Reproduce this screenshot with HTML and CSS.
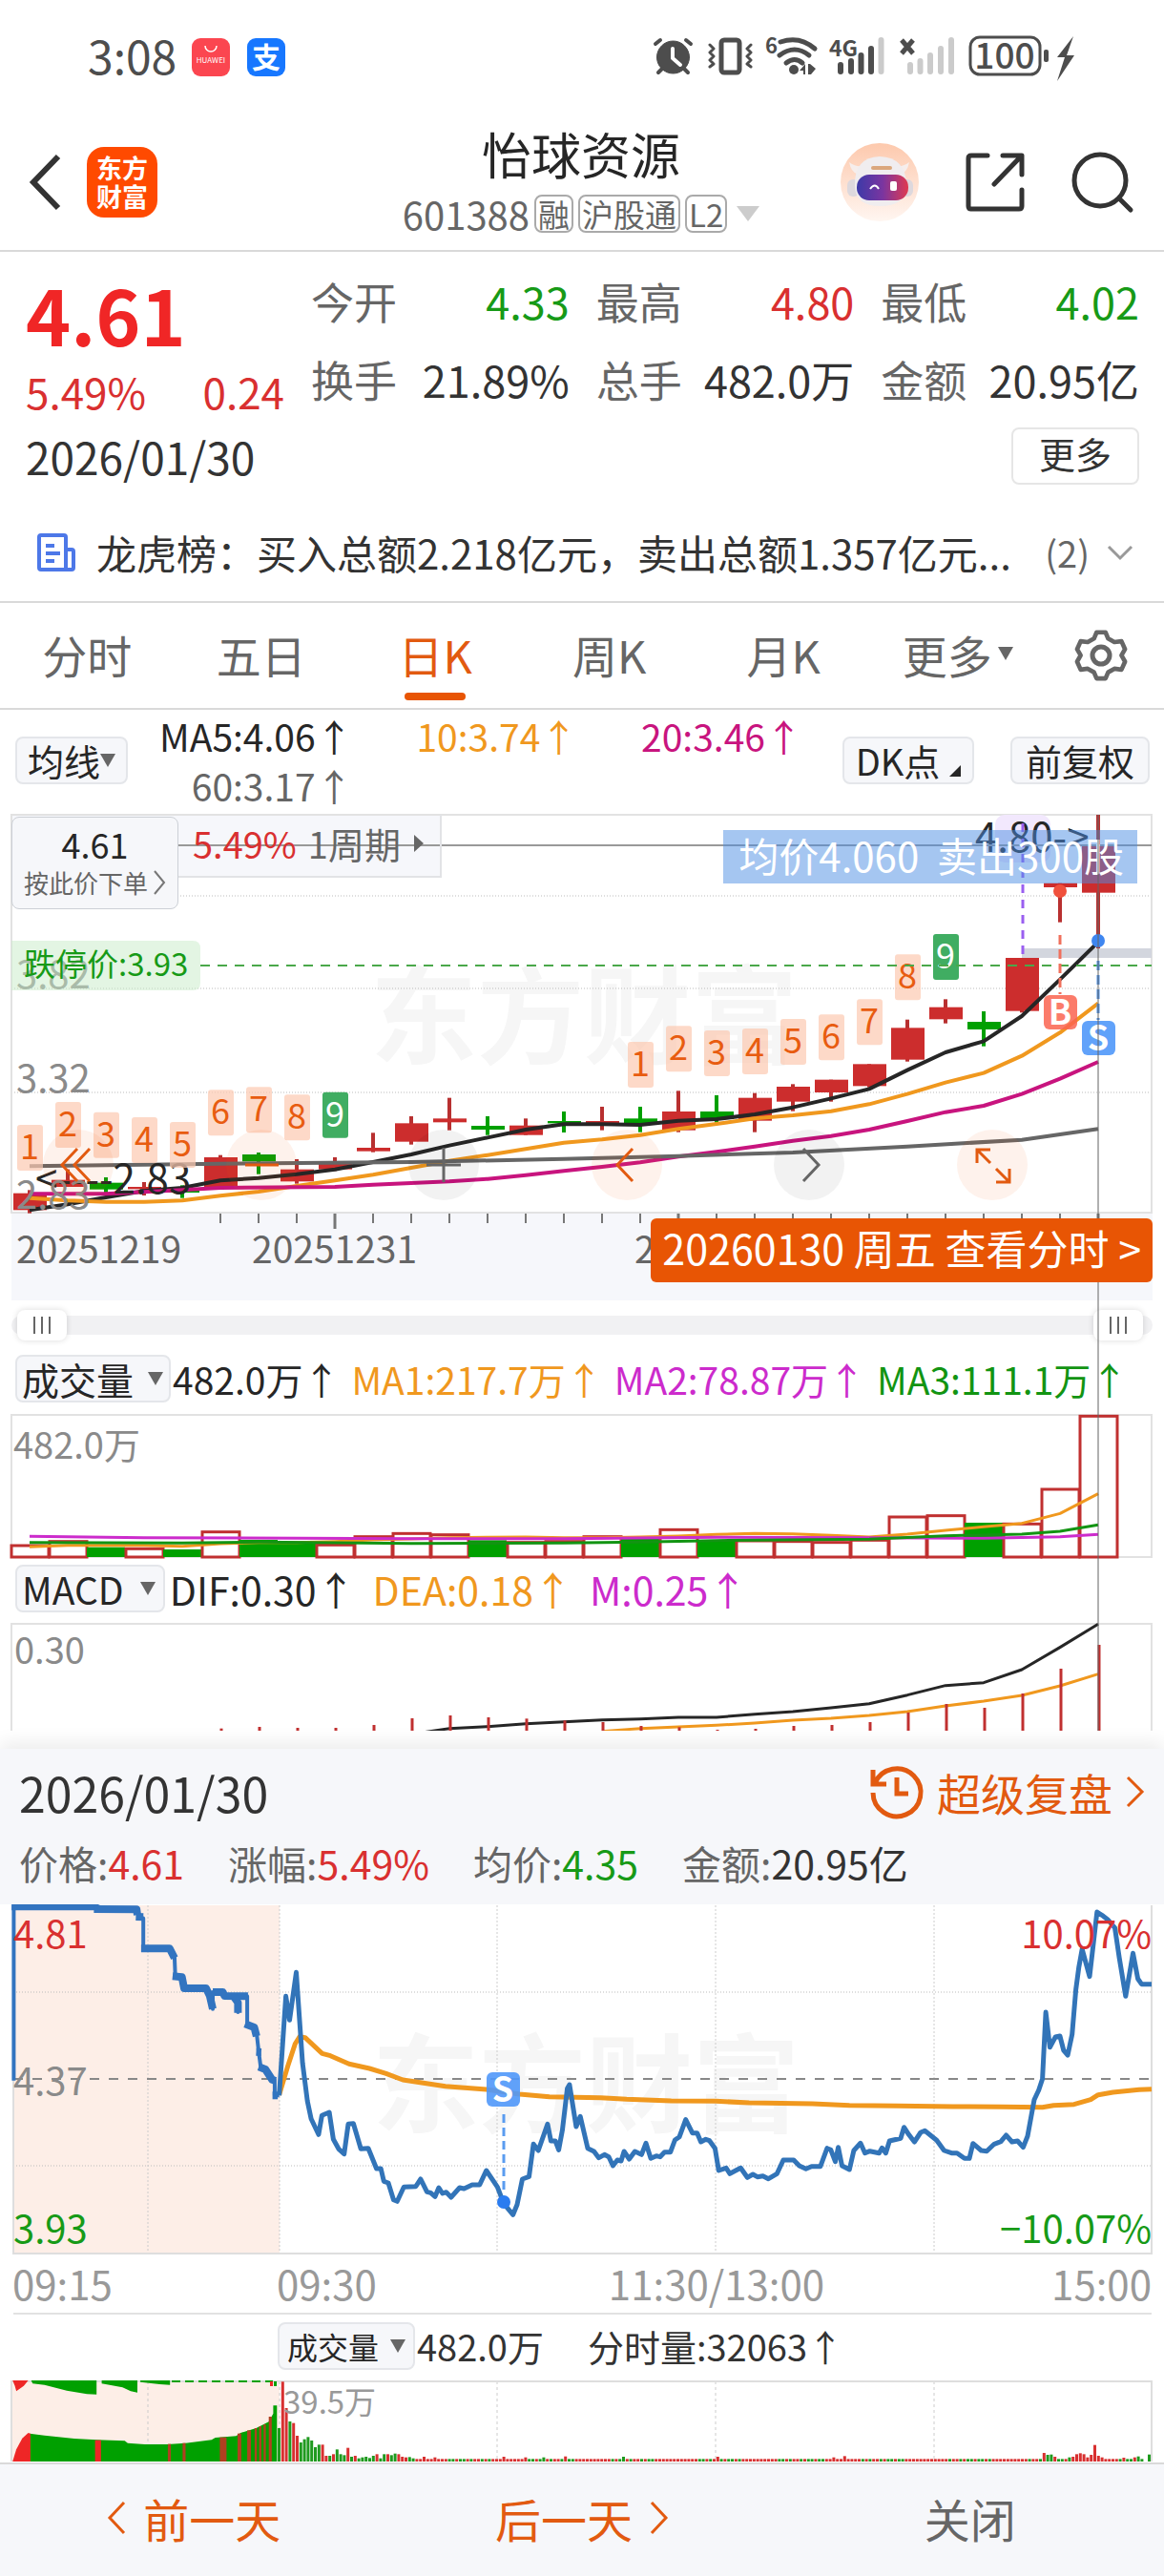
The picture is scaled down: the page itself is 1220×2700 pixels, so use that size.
FILE: index.html
```html
<!DOCTYPE html>
<html lang="zh-CN">
<head>
  <meta charset="UTF-8">
  <meta name="viewport" content="width=device-width, initial-scale=1.0">
  <title>怡球资源 601388</title>
  <link rel="stylesheet" href="styles.css">
</head>
<body>
  <!-- Status bar -->
  <div class="status-bar">
    <span class="clock">3:08</span>
    <svg class="app-icon" viewBox="0 0 40 40">
      <rect width="40" height="40" rx="9" fill="#fb4650"/>
      <path d="M14 8a6 6 0 0 0 12 0" fill="none" stroke="#fff" stroke-width="1.5"/>
      <text x="20" y="26" text-anchor="middle" font-size="8" fill="#fff">HUAWEI</text>
    </svg>
    <svg class="app-icon" viewBox="0 0 40 40">
      <rect width="40" height="40" rx="9" fill="#1777ff"/>
      <text x="20" y="31" text-anchor="middle" font-size="30" font-weight="bold" fill="#fff">支</text>
    </svg>
    <svg class="status-icons" viewBox="14 10 444 50" fill="#4d4d4d">
      <g stroke="#4d4d4d" stroke-linecap="round" stroke-linejoin="round">
        <circle cx="35.500" cy="35" r="17"/>
        <path d="M17 21l5-4M54 21l-5-4M24 47l-4 4M47 47l4 4" stroke-width="4" fill="none"/>
        <path d="M35 26v10l8 7" stroke="#fff" stroke-width="4" fill="none"/>
        <rect x="86" y="17" width="19" height="34" rx="3" stroke-width="5" fill="none"/>
        <path d="M74 22l4 4-4 4 4 4-4 4 4 4-4 3M117 22l-4 4 4 4-4 4 4 4-4 4 4 3" stroke-width="3" fill="none"/>
        <path d="M148 19q20-7 36 7M147 33q16-12 31 0M154 41q9-7 17 0" stroke-width="5" fill="none"/>
      </g>
      <circle cx="162" cy="48" r="5"/>
      <path d="M168 49l6-7v11h-2v-4zM177 42h2l6 5-5 6h-3z"/>
      <text x="132" y="31" font-size="22" font-weight="bold">6</text>
      <text x="199" y="34" font-size="23" font-weight="bold">4G</text>
      <path d="M211 43v7M222 39v11M232.500 33v17M243 26v24" stroke="#4d4d4d" stroke-width="6" stroke-linecap="round"/>
      <path d="M253.500 17v33M284 43v7M294.500 39v11M305 33v17M316 26v24M327 17v33" stroke="#cbcbcb" stroke-width="6" stroke-linecap="round"/>
      <path d="M275 17l12 14M287 17l-12 14" stroke="#4d4d4d" stroke-width="5"/>
      <rect x="347" y="14" width="73" height="39" rx="10" fill="none" stroke="#4d4d4d" stroke-width="3"/>
      <text x="383" y="47" text-anchor="middle" font-size="37" font-weight="500">100</text>
      <rect x="424" y="27" width="5" height="13" rx="2"/>
      <path d="M455 13l-17 22h8l-8 25 18-27h-8z"/>
    </svg>
  </div>

  <!-- Header -->
  <header class="header">
    <div class="header-side">
      <button class="icon-button" aria-label="返回">
        <svg width="34" height="60" viewBox="0 0 34 60"><path d="M30 3L4 30l26 27" fill="none" stroke="#333" stroke-width="6"/></svg>
      </button>
      <svg class="logo" viewBox="0 0 74 74">
        <rect width="74" height="74" rx="18" fill="#ff4a00"/>
        <text x="37" y="33" text-anchor="middle" font-size="27" font-weight="bold" fill="#fff">东方</text>
        <text x="37" y="63" text-anchor="middle" font-size="27" font-weight="bold" fill="#fff">财富</text>
      </svg>
    </div>
    <div class="stock">
      <h1>怡球资源</h1>
      <div class="stock-code">
        <span>601388</span>
        <span class="tag">融</span>
        <span class="tag">沪股通</span>
        <span class="tag">L2</span>
        <span class="stock-arrow"></span>
      </div>
    </div>
    <div class="header-side right">
      <button class="icon-button" aria-label="智能助手">
        <svg width="82" height="82" viewBox="0 0 82 82">
          <defs>
            <linearGradient id="halo" x1="0" y1="0" x2="0" y2="1"><stop offset="0" stop-color="#fdc9ad"/><stop offset="1" stop-color="#fff6f1"/></linearGradient>
            <linearGradient id="visor"><stop offset="0" stop-color="#3d3aa8"/><stop offset="0.500" stop-color="#7a35a0"/><stop offset="1" stop-color="#e03a50"/></linearGradient>
          </defs>
          <circle cx="41" cy="41" r="41" fill="url(#halo)"/>
          <path d="M9 20q2 10 8 12l6-8q-8 1-14-4zM72 20q-2 10-8 12l-6-8q8 1 14-4z" fill="#f6eeec"/>
          <rect x="7" y="38" width="13" height="18" rx="6" fill="#ddd8dd"/>
          <rect x="63" y="38" width="13" height="18" rx="6" fill="#ddd8dd"/>
          <path d="M15 45q-1-30 26-31 28 1 28 31 0 21-28 21-25 0-26-21z" fill="#f0edef"/>
          <rect x="17" y="33" width="54" height="27" rx="13" fill="url(#visor)"/>
          <rect x="32" y="24" width="22" height="4" rx="2" fill="#dba77d"/>
          <path d="M31 48q5-7 9 0" fill="none" stroke="#fff" stroke-width="2"/>
          <rect x="52" y="40" width="7" height="10" rx="2" fill="#fff"/>
        </svg>
      </button>
      <button class="icon-button" aria-label="分享">
        <svg width="64" height="64" viewBox="0 0 64 64" fill="none" stroke="#333" stroke-width="5" stroke-linecap="round" stroke-linejoin="round"><path d="M24 4H7q-3 0-3 3v50q0 3 3 3h50q3 0 3-3V40M40 4h20v20M59 5L31 34"/></svg>
      </button>
      <button class="icon-button" aria-label="搜索">
        <svg width="64" height="66" viewBox="0 0 64 66" fill="none" stroke="#333" stroke-width="5" stroke-linecap="round"><circle cx="30" cy="31" r="27"/><path d="M50 50l12 12"/></svg>
      </button>
    </div>
  </header>

  <!-- Quote summary -->
  <section class="quote">
    <div class="price-block">
      <div class="price">4.61</div>
      <div class="change"><span>5.49%</span><span>0.24</span></div>
    </div>
    <dl class="stats">
      <div><dt>今开</dt><dd class="down">4.33</dd></div>
      <div><dt>最高</dt><dd class="up">4.80</dd></div>
      <div><dt>最低</dt><dd class="down">4.02</dd></div>
      <div><dt>换手</dt><dd>21.89%</dd></div>
      <div><dt>总手</dt><dd>482.0万</dd></div>
      <div><dt>金额</dt><dd>20.95亿</dd></div>
    </dl>
  </section>
  <div class="date-row">
    <span>2026/01/30</span>
    <button class="more-button">更多</button>
  </div>
  <a class="news" href="#">
    <svg width="40" height="40" viewBox="0 0 40 40" fill="none" stroke="#4d78e8" stroke-width="4"><path d="M30 38H4q-2 0-2-2V4q0-2 2-2h24q2 0 2 2v34h6q2 0 2-2V19q0-2-2-2h-6M9 13h9M9 21h15M9 29h9"/></svg>
    <span class="news-text">龙虎榜：买入总额2.218亿元，卖出总额1.357亿元...</span>
    <span class="news-count">(2)</span>
    <svg width="28" height="16" viewBox="0 0 28 16" fill="none" stroke="#999" stroke-width="3"><path d="M2 2l12 12L26 2"/></svg>
  </a>

  <!-- Period tabs -->
  <nav class="tabs">
    <a href="#">分时</a>
    <a href="#">五日</a>
    <a href="#" class="active">日K</a>
    <a href="#">周K</a>
    <a href="#">月K</a>
    <a href="#">更多<i class="caret"></i></a>
    <button class="icon-button settings" aria-label="设置">
      <svg width="56" height="58" viewBox="0 0 56 58" fill="none" stroke="#666" stroke-width="5" stroke-linejoin="round"><path d="M23 3h10l3 7 7 4 8-1 4 9-4 7 4 7-4 9-8-1-7 4-3 7H23l-3-7-7-4-8 1-4-9 4-7-4-7 4-9 8 1 7-4z" transform="translate(2 2) scale(0.930)"/><circle cx="28" cy="29" r="9"/></svg>
    </button>
  </nav>

  <main class="charts">
    <div class="ma-bar">
      <button class="chip">均线<i class="caret"></i></button>
      <div class="ma-values">
        <span class="dark">MA5:4.06↑</span>
        <span class="orange">10:3.74↑</span>
        <span class="magenta">20:3.46↑</span>
        <span class="gray">60:3.17↑</span>
      </div>
      <button class="chip dk">DK点<i class="corner"></i></button>
      <button class="chip adjust">前复权</button>
    </div>

    <!-- Daily K chart -->
    <div class="k-chart">
      <svg id="kChart" viewBox="0 0 1220 514"></svg>
      <div class="price-tip">
        <button class="order-button">4.61<small>按此价下单<svg width="14" height="26" viewBox="0 0 14 26" fill="none" stroke="#777" stroke-width="2"><path d="M2 1l10 12L2 25"/></svg></small></button>
        <button class="cycle-button"><b>5.49%</b>1周期<i class="caret-right"></i></button>
      </div>
      <div class="trade-tip">均价4.060&nbsp; 卖出300股</div>
      <div class="chart-tools">
        <button aria-label="最左"><svg viewBox="0 0 74 74"><path d="M36 20L20 37l16 17M49 20L33 37l16 17"/></svg></button>
        <button aria-label="缩小"><svg viewBox="0 0 74 74"><path d="M20 37h35"/></svg></button>
        <button class="muted" aria-label="放大"><svg viewBox="0 0 74 74"><path d="M19 37h36M37 19v36"/></svg></button>
        <button aria-label="左移"><svg viewBox="0 0 74 74"><path d="M43 20L27 37l16 17"/></svg></button>
        <button class="muted" aria-label="右移"><svg viewBox="0 0 74 74"><path d="M31 20l16 17-16 17"/></svg></button>
        <button aria-label="全屏"><svg viewBox="0 0 74 74"><path d="M35 21H21v14M21 21l14 14M41 55h14V41M55 55L41 41"/></svg></button>
      </div>
      <button class="minute-button">20260130 周五 查看分时 &gt;</button>
    </div>

    <div class="range">
      <input type="range" min="0" max="100" value="0" aria-label="起始日期">
      <input type="range" min="0" max="100" value="100" aria-label="结束日期">
    </div>

    <div class="indicator volume">
      <button class="chip">成交量<i class="caret"></i></button>
      <span class="dark">482.0万↑</span>
      <span class="orange">MA1:217.7万↑</span>
      <span class="purple">MA2:78.87万↑</span>
      <span class="green">MA3:111.1万↑</span>
    </div>
    <svg id="volumeChart" viewBox="0 130 1220 156"></svg>

    <div class="indicator macd">
      <button class="chip">MACD<i class="caret"></i></button>
      <span class="dark">DIF:0.30↑</span>
      <span class="orange">DEA:0.18↑</span>
      <span class="purple">M:0.25↑</span>
    </div>
    <svg id="macdChart" viewBox="0 350 1220 115"></svg>
    <div class="crosshair"></div>
  </main>

  <!-- Intraday sheet -->
  <section class="sheet">
    <div class="sheet-head">
      <div class="sheet-title">
        <h2>2026/01/30</h2>
        <a href="#">
          <svg width="56" height="54" viewBox="0 0 56 54" fill="none" stroke="#e25a10" stroke-width="5"><path d="M5 18A25 25 0 1 1 3 28M3 4v15h14M28 12v17h12"/></svg>
          超级复盘
          <svg width="20" height="34" viewBox="0 0 20 34" fill="none" stroke="#e25a10" stroke-width="3"><path d="M2 2l15 15L2 32"/></svg>
        </a>
      </div>
      <div class="sheet-values">
        <span>价格:<b class="up">4.61</b></span>
        <span>涨幅:<b class="up">5.49%</b></span>
        <span>均价:<b class="down">4.35</b></span>
        <span>金额:<b>20.95亿</b></span>
      </div>
    </div>
    <svg id="minuteChart" viewBox="0 7 1220 430"></svg>
    <div class="indicator minute">
      <button class="chip">成交量<i class="caret"></i></button>
      <span>482.0万</span>
      <span class="minute-volume">分时量:32063↑</span>
    </div>
    <svg id="minuteVolume" viewBox="0 82 1220 90"></svg>
  </section>

  <footer class="footer">
    <button class="orange-text"><svg width="20" height="36" viewBox="0 0 20 36"><path d="M18 2L3 18l15 16"/></svg>前一天</button>
    <button class="orange-text">后一天<svg width="20" height="36" viewBox="0 0 20 36"><path d="M2 2l15 16L2 34"/></svg></button>
    <button>关闭</button>
  </footer>
  <script src="charts.js"></script>
</body>
</html>
```

FILE: styles.css
```css
* {
  box-sizing: border-box;
}
body {
  margin: 0;
  background: #fff;
  color: #333;
  font-family: "Noto Sans CJK SC", "Noto Sans", sans-serif;
  font-size: 38px;
  line-height: 1;
}
button {
  margin: 0;
  padding: 0;
  border: none;
  background: none;
  color: inherit;
  font: inherit;
  cursor: pointer;
}
a {
  color: inherit;
  text-decoration: none;
}
svg {
  display: block;
  flex-shrink: 0;
  overflow: visible;
}
h1, h2, dl, dd {
  margin: 0;
  font-weight: normal;
}
i {
  flex-shrink: 0;
}

/* colours */
.up { color: #d93030; }
.down { color: #179a17; }
.dark { color: #262626; }
.gray { color: #666; }
.orange { color: #f0981e; }
.magenta { color: #c8147e; }
.purple { color: #cc2bcc; }
.green { color: #129412; }

.caret {
  display: inline-block;
  border: 8px solid transparent;
  border-top: 14px solid #666;
  border-bottom: 0;
}

/* status bar */
.status-bar {
  display: flex;
  align-items: center;
  height: 120px;
  padding: 0 92px;
}
.clock {
  padding-bottom: 6px;
  font-size: 48px;
  color: #4d4d4d;
  margin-right: 16px;
}
.app-icon {
  width: 40px;
  height: 40px;
  margin-right: 18px;
}
.status-icons {
  width: 444px;
  height: 50px;
  margin-left: auto;
}

/* header */
.header {
  display: grid;
  grid-template-columns: 1fr auto 1fr;
  align-items: center;
  height: 144px;
  padding: 0 33px 0 31px;
  border-bottom: 2px solid #d9d9d9;
}
.header-side {
  display: flex;
  align-items: center;
  gap: 26px;
}
.header-side.right {
  justify-content: flex-end;
  gap: 48px;
}
.icon-button {
  display: flex;
}
.logo {
  width: 74px;
  height: 74px;
}
.stock {
  padding-bottom: 2px;
  text-align: center;
}
.stock h1 {
  font-size: 52px;
  line-height: 68px;
  color: #262626;
}
.stock-code {
  display: flex;
  align-items: center;
  justify-content: center;
  gap: 5px;
  font-size: 40px;
  line-height: 58px;
  color: #666;
}
.tag {
  padding: 0 2px;
  border: 2px solid #aaa;
  border-radius: 8px;
  font-size: 33px;
  line-height: 36px;
}
.stock-arrow {
  margin-left: 5px;
  border: 12px solid transparent;
  border-top: 16px solid #ccc;
  border-bottom: 0;
}

/* quote */
.quote {
  display: flex;
  gap: 28px;
  padding: 12px 26px 0 27px;
}
.price-block {
  width: 271px;
  color: #d93030;
}
.price {
  font-size: 80px;
  font-weight: bold;
  line-height: 104px;
  color: #f02626;
}
.change {
  display: flex;
  justify-content: space-between;
  font-size: 44px;
  line-height: 60px;
}
.stats {
  flex: 1;
  display: grid;
  grid-template-columns: repeat(3, 1fr);
  column-gap: 28px;
  font-size: 45px;
  line-height: 80px;
}
.stats div {
  display: flex;
  justify-content: space-between;
}
.stats dt {
  color: #666;
}
.date-row {
  display: flex;
  align-items: center;
  justify-content: space-between;
  height: 76px;
  padding: 0 26px 0 27px;
  font-size: 46px;
}
.more-button {
  width: 134px;
  height: 60px;
  padding-bottom: 6px;
  border: 2px solid #e6e6e6;
  border-radius: 8px;
  font-size: 38px;
}
.news {
  display: flex;
  align-items: center;
  height: 116px;
  padding: 12px 32px 0 39px;
  border-bottom: 2px solid #d9d9d9;
}
.news-text {
  flex: 1;
  margin-left: 22px;
  font-size: 42px;
  white-space: nowrap;
  overflow: hidden;
  text-overflow: ellipsis;
  line-height: 60px;
}
.news-count {
  margin: 0 18px;
  color: #666;
}

/* tabs */
.tabs {
  display: grid;
  grid-template-columns: repeat(6, 1fr) 125px;
  height: 112px;
  border-bottom: 2px solid #d9d9d9;
  font-size: 47px;
  color: #666;
}
.tabs a {
  display: flex;
  align-items: center;
  justify-content: center;
  position: relative;
  padding-bottom: 4px;
}
.tabs a .caret {
  margin-left: 6px;
}
.tabs a.active {
  color: #e25a10;
}
.tabs a.active::after {
  content: "";
  position: absolute;
  bottom: 8px;
  width: 64px;
  height: 8px;
  border-radius: 4px;
  background: #e85504;
}
.settings {
  align-items: center;
  justify-content: center;
  padding-right: 8px;
}

/* k chart */
.charts {
  position: relative;
}
.charts > svg, .k-chart > svg, .sheet > svg {
  width: 100%;
  height: auto;
  overflow: hidden;
}
.ma-bar {
  display: flex;
  align-items: center;
  height: 105px;
  padding: 0 15px 0 16px;
}
.chip {
  display: flex;
  align-items: center;
  justify-content: center;
  height: 50px;
  padding: 0 8px;
  border: 2px solid #e4e6ea;
  border-radius: 8px;
  background: #f6f7fa;
  color: #262626;
  white-space: nowrap;
}
.ma-bar .chip:first-child {
  width: 118px;
}
.ma-values {
  flex: 1;
  display: grid;
  grid-template-columns: repeat(3, 1fr);
  margin-right: 42px;
  text-align: right;
  font-size: 39px;
  line-height: 52px;
}
.dk {
  width: 138px;
  margin-right: 38px;
  padding: 0 4px;
}
.adjust {
  width: 146px;
}
.corner {
  align-self: flex-end;
  margin: 0 0 6px 10px;
  border-left: 12px solid transparent;
  border-bottom: 12px solid #262626;
}
.k-chart {
  position: relative;
}
.price-tip {
  position: absolute;
  top: 5px;
  left: 12px;
  display: flex;
  align-items: flex-start;
}
.order-button {
  width: 175px;
  height: 97px;
  margin-top: 2px;
  padding-bottom: 6px;
  border: 1px solid #ccd0d6;
  border-radius: 8px;
  background: #f6f7fa;
  color: #262626;
  font-size: 36px;
}
.order-button small {
  display: flex;
  align-items: center;
  justify-content: center;
  gap: 5px;
  margin-top: 10px;
  font-size: 26px;
  color: #666;
}
.cycle-button {
  display: flex;
  align-items: center;
  height: 66px;
  padding: 0 17px 4px 15px;
  border: 2px solid #e2e3e6;
  border-left: 0;
  border-top: 0;
  color: #666;
}
.cycle-button b {
  margin-right: 12px;
  font-weight: normal;
  color: #d93030;
}
.caret-right {
  margin-left: 14px;
  border: 9px solid transparent;
  border-left: 10px solid #666;
  border-right: 0;
}
.trade-tip {
  position: absolute;
  top: 21px;
  right: 28px;
  padding: 0 14px 4px 16px;
  background: rgba(76, 142, 228, 0.5);
  color: #fff;
  font-size: 42px;
  line-height: 52px;
}
.chart-tools {
  position: absolute;
  top: 335px;
  left: 45px;
  width: 1032px;
  max-width: 90%;
  display: flex;
  justify-content: space-between;
}
.chart-tools button {
  width: 74px;
  height: 74px;
  border-radius: 50%;
  background: rgba(240, 90, 10, 0.08);
}
.chart-tools .muted {
  background: rgba(0, 0, 0, 0.05);
}
.chart-tools path {
  fill: none;
  stroke: #e25a10;
  stroke-width: 3;
}
.chart-tools .muted path {
  stroke: #666;
}
.minute-button {
  position: absolute;
  right: 12px;
  bottom: 19px;
  height: 67px;
  padding: 0 12px 6px;
  border-radius: 6px;
  background: #e85504;
  color: #fff;
  font-size: 43px;
  z-index: 2;
}
.crosshair {
  position: absolute;
  top: 110px;
  bottom: 0;
  right: 68px;
  width: 2px;
  background: rgba(100, 100, 100, 0.5);
}

/* date range slider */
.range {
  position: relative;
  height: 20px;
  margin: 16px 12px 0;
  border-radius: 10px;
  background: #f1f1f3;
}
.range input {
  position: absolute;
  top: -6px;
  left: 6px;
  width: calc(100% - 16px);
  height: 32px;
  margin: 0;
  appearance: none;
  background: none;
  pointer-events: none;
}
.range input::-webkit-slider-thumb {
  appearance: none;
  width: 52px;
  height: 32px;
  border-radius: 8px;
  box-shadow: 0 0 6px rgba(0, 0, 0, 0.15);
  background:
    linear-gradient(#666, #666) 17px 7px / 2px 18px no-repeat,
    linear-gradient(#666, #666) 25px 7px / 2px 18px no-repeat,
    linear-gradient(#666, #666) 33px 7px / 2px 18px no-repeat,
    #fff;
  pointer-events: auto;
}

/* indicator headers */
.indicator {
  display: flex;
  align-items: center;
  gap: 18px;
  height: 64px;
  padding-left: 16px;
  white-space: nowrap;
}
.indicator .chip {
  padding: 0 8px 0 5px;
  margin-right: -13px;
}
.indicator .chip .caret {
  margin-left: 17px;
}
.indicator.volume {
  gap: 12px;
  height: 80px;
  padding-top: 12px;
  font-size: 39px;
}
.volume .chip {
  margin-right: -10px;
  padding-right: 6px;
}
.volume .chip .caret {
  margin-left: 15px;
}
.indicator.macd {
  padding-bottom: 4px;
  font-size: 41px;
}
.macd .chip {
  font-size: 39px;
}

/* sheet */
.sheet {
  margin-top: 19px;
  background: #fff;
  box-shadow: 0 -6px 18px rgba(0, 0, 0, 0.08);
}
.sheet-head {
  padding: 11px 20px 0 20px;
  height: 163px;
  background: #f6f7fa;
}
.sheet-title {
  display: flex;
  align-items: center;
  justify-content: space-between;
  height: 68px;
}
.sheet-title h2 {
  font-size: 50px;
}
.sheet-title a {
  display: flex;
  align-items: center;
  gap: 14px;
  font-size: 46px;
  color: #e25a10;
}
.sheet-values {
  display: flex;
  gap: 46px;
  font-size: 41px;
  line-height: 80px;
  color: #666;
  white-space: nowrap;
}
.sheet-values b {
  font-weight: normal;
}
.sheet-values span:last-child b {
  color: #333;
}
.indicator.minute {
  height: 65px;
  padding-left: 291px;
}
.minute .chip {
  padding: 0 8px;
  margin-right: -16px;
  font-size: 32px;
}
.minute .chip .caret {
  margin-left: 12px;
}
.minute-volume {
  margin-left: 28px;
}

/* footer */
.footer {
  display: flex;
  height: 119px;
  border-top: 2px solid #d9d9d9;
  background: #f6f7fa;
}
.footer button {
  flex: 1;
  display: flex;
  align-items: center;
  justify-content: center;
  gap: 18px;
  padding-bottom: 6px;
  font-size: 48px;
  color: #666;
}
.footer .orange-text {
  color: #e25a10;
}
.footer path {
  fill: none;
  stroke: #e25a10;
  stroke-width: 3;
}

/* chart text */
.label { font-size: 40px; fill: #8a8a8a; }
.label.small { font-size: 38px; }
.label.peak { font-size: 33px; fill: #999; }
.label.limit { font-size: 33px; }
.label.time { font-size: 42px; fill: #999; }
.label.axis { font-size: 39px; fill: #666; }
.label.mark { font-size: 42px; fill: #262626; }
.label.up { fill: #d93030; }
.label.down { fill: #179a17; }
.watermark { font-size: 112px; font-weight: bold; fill: #f6f6f6; }
.count { font-size: 36px; text-anchor: middle; }
.trade { font-size: 36px; font-weight: bold; fill: #fff; text-anchor: middle; }
.end { text-anchor: end; }
.middle { text-anchor: middle; }
```

FILE: charts.js
```js
const RED = '#cc2d2d';
const GREEN = '#00a000';
const ORANGE = '#f0981e';
const STEP = 40;

function el(name, attrs) {
  let out = '<' + name;
  for (const key in attrs) out += ` ${key}="${attrs[key]}"`;
  return out + '/>';
}
function rect(x, y, width, height, fill, extra) {
  return el('rect', { x, y, width, height, fill, ...extra });
}
function hline(x1, x2, y, stroke, extra) {
  return el('line', { x1, x2, y1: y, y2: y, stroke, 'stroke-width': 2, ...extra });
}
function vline(x, y1, y2, stroke, extra) {
  return el('line', { x1: x, x2: x, y1, y2, stroke, 'stroke-width': 2, ...extra });
}
function text(x, y, cls, value, extra = '') {
  return `<text x="${x}" y="${y}" class="${cls}" ${extra}>${value}</text>`;
}
function line(points, stroke, width) {
  return el('polyline', { points: points.map(p => p.join(',')).join(' '), fill: 'none', stroke, 'stroke-width': width, 'stroke-linejoin': 'round' });
}
const dayX = i => 31 + i * STEP;
// [index, value] pairs, three value units to a pixel
const daily = list => list.map(([i, v]) => [dayX(i), v / 3]);
const DOTS = { 'stroke-dasharray': '1 2', 'stroke-width': 1 };

// ---- Daily K ----
function drawK() {
  // [open/close top, bottom, high, low, rising]
  const candles = [
    [1205, 1258, 1195, 1268, 1], [1163, 1185, 1130, 1185, 1], [1172, 1193, 1155, 1210, 0], [1185, 1192, 1170, 1212, 1],
    [1197, 1203, 1180, 1220, 0], [1092, 1185, 1085, 1188, 1], [1083, 1105, 1077, 1145, 0], [1130, 1168, 1098, 1175, 1],
    [1113, 1130, 1092, 1135, 1], [1062, 1073, 1015, 1076, 1], [985, 1043, 963, 1052, 1], [970, 982, 905, 1007, 1],
    [993, 1005, 963, 1022, 0], [992, 1022, 970, 1022, 1], [978, 985, 948, 1014, 0], [978, 986, 933, 1007, 1],
    [970, 985, 933, 1013, 0], [948, 1007, 883, 1013, 1], [948, 972, 897, 983, 0], [905, 977, 890, 1013, 1],
    [870, 917, 862, 947, 1], [848, 888, 848, 917, 1], [799, 868, 799, 872, 1], [685, 785, 659, 791, 1],
    [620, 658, 595, 671, 1], [666, 690, 633, 743, 0], [465, 632, 465, 637, 1], [230, 243, 230, 353, 1], [112, 260, 15, 435, 1]
  ];
  const ma5 = [1258, 1240, 1218, 1198, 1188, 1165, 1157, 1145, 1130, 1107, 1083, 1055, 1030, 1005, 988, 988, 990, 977, 972, 957, 935, 907, 877, 818, 762, 727, 648, 533, 415];
  const ma10 = [1220, 1228, 1232, 1232, 1228, 1213, 1200, 1182, 1165, 1147, 1125, 1103, 1085, 1066, 1046, 1036, 1022, 1003, 987, 970, 960, 947, 925, 893, 857, 827, 773, 700, 608];
  const ma20 = [[0, 1207], [2, 1207], [4, 1195], [5, 1188], [8, 1185], [9, 1178], [11, 1168], [12, 1160], [13, 1148], [14, 1135], [15, 1122], [16, 1108], [17, 1090], [18, 1075], [19, 1058], [20, 1040], [21, 1025], [22, 1005], [23, 978], [24, 950], [25, 930], [26, 893], [27, 845], [28, 792]];
  const ma60 = [[0, 1120], [5, 1112], [10, 1107], [14, 1097], [17, 1088], [20, 1077], [23, 1058], [26, 1037], [28, 1003]];
  const counts = [
    [0, 990, 1], [1, 918, 2], [2, 950, 3], [3, 966, 4], [4, 981, 5], [5, 880, 6], [6, 871, 7], [7, 895, 8], [8, 887, 9],
    [16, 729, 1], [17, 679, 2], [18, 693, 3], [19, 687, 4], [20, 657, 5], [21, 643, 6], [22, 595, 7], [23, 454, 8], [24, 390, 9]
  ];

  let s = rect(12, 422, 1196, 92, '#f6f7fb');
  s += text(388, 258, 'watermark', '东方财富');
  s += rect(12, 5, 450, 66, '#f6f7fb');
  [90, 187, 296].forEach(y => s += hline(12, 1207, y, '#bbb', DOTS));
  s += rect(12, 5, 1195, 417, 'none', { stroke: '#e2e2e2', 'stroke-width': 2 });
  s += rect(1071, 145, 136, 10, '#d3d6de');
  s += rect(1043, 5, 58, 50, '#f2e8fd', { rx: 10 });

  for (let i = 5; i < 29; i++) {
    const major = i === 8 || i === 17 || i === 28;
    s += vline(dayX(i), 423, i === 8 ? 439 : 433, '#777', { 'stroke-width': major ? 3 : 2 });
  }
  s += text(17, 187, 'label', '3.82') + text(17, 296, 'label', '3.32');

  candles.forEach(([top, bottom, high, low, rising], i) => {
    const color = rising ? RED : GREEN;
    s += rect(dayX(i) - 2, high / 3, 4, (low - high) / 3, rising ? '#b83030' : color);
    s += rect(dayX(i) - 17, top / 3, 35, (bottom - top) / 3, color);
  });

  s += line(daily(ma5.map((v, i) => [i, v])), '#262626', 4);
  s += line(daily(ma10.map((v, i) => [i, v])), ORANGE, 4);
  s += line(daily(ma20), '#c8147e', 4);
  s += line(daily(ma60), '#666', 4);

  s += text(37, 402, 'label mark', '&lt;----2.83');
  s += text(17, 418, 'label', '2.83');
  s += text(1022, 44, 'label mark', '4.80-&gt;');

  counts.forEach(([i, top, n]) => {
    const done = n === 9;
    s += rect(dayX(i) - 13, top / 3, 27, 48, done ? '#40ad62' : '#fcc9b0', { rx: 3, 'fill-opacity': done ? 1 : 0.7 });
    s += text(dayX(i), top / 3 + 36, 'count', n, `fill="${done ? '#fff' : '#e85c10'}"`);
  });

  // limit-down price
  s += hline(210, 1207, 163, '#4aa84a', { 'stroke-dasharray': '10 8' });
  s += el('path', { d: 'M12 137h190q8 0 8 8v36q0 8-8 8H12z', fill: '#c8ecc8', 'fill-opacity': 0.5 });
  s += text(25, 174, 'label down limit', '跌停价:3.93');

  // trade marks
  s += vline(1072, 14, 155, '#9a5ff0', { 'stroke-width': 3, 'stroke-dasharray': '9 7' });
  s += vline(1111, 131, 193, '#f0705c', { 'stroke-width': 3, 'stroke-dasharray': '10 5' });
  s += vline(1151, 158, 220, '#4a90e8', { 'stroke-width': 3, 'stroke-dasharray': '10 5' });
  s += el('circle', { cx: 1111, cy: 85, r: 7, fill: '#f0503c' });
  s += el('circle', { cx: 1151, cy: 137, r: 7, fill: '#3e86f0' });
  s += rect(1094, 194, 35, 36, '#fa6450', { rx: 6, 'fill-opacity': 0.85 }) + text(1111, 225, 'trade', 'B');
  s += rect(1134, 221, 35, 36, '#5098fa', { rx: 6, 'fill-opacity': 0.9 }) + text(1151, 252, 'trade', 'S');

  s += hline(187, 1207, 37, '#999');
  s += text(17, 475, 'label axis', '20251219') + text(264, 475, 'label axis', '20251231') + text(665, 475, 'label axis', '2');
  document.getElementById('kChart').innerHTML = s;
}

// ---- Daily volume ----
function drawVolume() {
  const tops = [810, 797, 818, 820, 825, 767, 795, 805, 808, 782, 772, 776, 796, 800, 797, 782, 783, 760, 795, 795, 797, 800, 793, 720, 716, 741, 742, 633, 403];
  const falling = [2, 4, 6, 7, 12, 16, 18, 25];
  const ma1 = [817, 812, 812, 812, 815, 807, 803, 803, 800, 795, 792, 788, 787, 786, 788, 788, 786, 783, 778, 775, 776, 781, 786, 777, 765, 754, 743, 712, 650];
  let s = rect(12, 134, 1195, 149, 'none', { stroke: '#e2e2e2', 'stroke-width': 2 });
  s += text(14, 180, 'label small', '482.0万');
  tops.forEach((top, i) => {
    const y = top / 3;
    if (falling.includes(i)) s += rect(dayX(i) - 20, y, 40, 283 - y, GREEN);
    else s += rect(dayX(i) - 19, y + 1, 39, 282 - y, '#fff', { stroke: '#c03030', 'stroke-width': 3 });
  });
  s += line(daily(ma1.map((v, i) => [i, v])), ORANGE, 3);
  s += line(daily([[0, 784], [3, 788], [10, 791], [14, 791], [18, 787], [22, 788], [25, 790], [27, 785], [28, 778]]), '#cc2bcc', 3);
  s += line(daily([[0, 803], [4, 805], [6, 802], [10, 806], [14, 805], [16, 802], [18, 797], [22, 793], [24, 782], [26, 777], [27, 768], [28, 748]]), '#129412', 3);
  document.getElementById('volumeChart').innerHTML = s;
}

// ---- MACD ----
function drawMacd() {
  const bars = [1388, 1383, 1386, 1386, 1377, 1356, 1347, 1353, 1357, 1363, 1368, 1380, 1384, 1392, 1389, 1380, 1377, 1368, 1338, 1311, 1323, 1278, 1200, 1125];
  const dif = [1406, 1388, 1382, 1373, 1367, 1361, 1358, 1353, 1353, 1343, 1335, 1323, 1310, 1283, 1253, 1244, 1203, 1133, 1060];
  const dea = [1397, 1388, 1383, 1378, 1371, 1362, 1356, 1347, 1335, 1317, 1302, 1284, 1254, 1217];
  let s = el('path', { d: 'M12 465V353H1207V465', fill: 'none', stroke: '#e2e2e2', 'stroke-width': 2 });
  s += text(15, 395, 'label small', '0.30');
  s += line(daily(dif.map((v, i) => [i + 10, v])), '#262626', 3);
  s += line(daily(dea.map((v, i) => [i + 15, v])), ORANGE, 3);
  bars.forEach((top, i) => s += vline(dayX(i + 5) + 1, top / 3, 465, '#c03030', { 'stroke-width': 3 }));
  document.getElementById('macdChart').innerHTML = s;
}

// ---- Intraday price ----
const minute = list => list.map(([x, y]) => [(x / 2.57).toFixed(1), (y / 3).toFixed(1)]);
function drawMinute() {
  const auction = [[37, 575], [37, 28], [265, 28], [265, 36], [368, 38], [376, 60], [386, 65], [386, 160], [455, 160], [470, 185], [472, 245], [490, 250], [497, 285], [553, 285], [573, 310], [573, 350], [573, 297], [600, 297], [605, 309], [641, 312], [641, 360], [641, 310], [666, 310], [666, 397], [685, 408], [692, 435], [697, 485], [702, 532], [715, 540], [732, 572], [740, 572], [740, 622], [752, 622]];
  const thick = [[[31, 28], [265, 28]], [[253, 36], [368, 37], [370, 55]], [[366, 60], [386, 61]], [[380, 160], [457, 160], [470, 190]], [[465, 247], [490, 250], [496, 285], [555, 285], [565, 308], [573, 350]], [[573, 297], [600, 297], [605, 309], [668, 310]], [[630, 312], [641, 330], [641, 362]], [[660, 397], [685, 408], [691, 436]], [[690, 485], [704, 486]], [[697, 532], [715, 540], [733, 572], [742, 576]], [[734, 622], [748, 622]]];
  const price = [
    [752, 622], [770, 310], [780, 385], [798, 235], [815, 520], [828, 640], [838, 695], [858, 745], [867, 685], [887, 675], [898, 760], [912, 790], [927, 806], [938, 712], [952, 710], [972, 790], [992, 788],
    [1014, 852], [1026, 852], [1034, 892], [1046, 897], [1060, 950], [1070, 955], [1088, 910], [1120, 908], [1133, 885], [1150, 925], [1160, 928], [1172, 940], [1182, 912], [1192, 930], [1202, 926], [1215, 942], [1238, 912], [1250, 915], [1272, 903], [1292, 903], [1310, 858], [1340, 910], [1357, 962], [1382, 997], [1393, 965], [1407, 885], [1425, 877], [1437, 775], [1450, 795], [1475, 712], [1484, 765], [1496, 765], [1505, 793], [1515, 730], [1528, 600], [1534, 588], [1552, 720], [1563, 688],
    [1583, 788], [1600, 798], [1613, 818], [1628, 808], [1640, 815], [1651, 843], [1663, 825], [1673, 828], [1681, 798], [1695, 822], [1710, 798], [1728, 808], [1740, 772], [1753, 820], [1768, 812], [1778, 815], [1790, 800], [1806, 800], [1818, 762], [1830, 752], [1847, 698], [1865, 740], [1878, 740], [1888, 768], [1901, 760], [1911, 764], [1926, 788], [1936, 858], [1956, 850], [1966, 868], [1995, 850], [2013, 880], [2028, 870], [2040, 878], [2055, 875], [2070, 884], [2093, 868], [2110, 825], [2138, 825], [2153, 843], [2171, 853], [2186, 845], [2210, 845], [2228, 788], [2238, 793], [2250, 830], [2258, 785], [2268, 843], [2288, 855], [2300, 795], [2318, 772], [2330, 803], [2343, 797], [2368, 803], [2376, 787], [2386, 803], [2396, 765], [2426, 757], [2435, 722], [2448, 745], [2463, 768], [2480, 738], [2491, 733], [2523, 763], [2543, 795], [2563, 803], [2578, 803], [2598, 820], [2611, 820], [2621, 773], [2643, 795], [2658, 797], [2678, 775], [2696, 767], [2710, 747], [2726, 768], [2741, 765], [2756, 785],
    [2768, 750], [2786, 635], [2798, 605], [2808, 570], [2817, 360], [2828, 470], [2843, 438], [2855, 435], [2865, 480], [2876, 495], [2888, 430], [2898, 290], [2906, 220], [2915, 162], [2935, 248], [2955, 45], [2968, 55], [2983, 68], [3003, 95], [3015, 190], [3032, 310], [3052, 175], [3065, 255], [3075, 272], [3102, 272]
  ];
  const average = [[752, 620], [775, 530], [795, 460], [807, 437], [822, 440], [868, 490], [890, 497], [940, 523], [995, 537], [1040, 553], [1085, 573], [1200, 593], [1310, 603], [1400, 618], [1480, 626], [1618, 629], [1688, 634], [1808, 639], [1928, 640], [2018, 645], [2188, 648], [2288, 653], [2418, 655], [2568, 657], [2698, 658], [2808, 659], [2838, 653], [2893, 650], [2938, 635], [2958, 620], [2998, 612], [3068, 604], [3102, 602]];

  let s = rect(14, 8, 279, 365, '#fdeee7');
  s += text(390, 238, 'watermark', '东方财富');
  [99, 281].forEach(y => s += hline(14, 1207, y, '#bbb', DOTS));
  [155, 293, 521, 750, 979].forEach(x => s += vline(x, 8, 373, '#ccc', { 'stroke-dasharray': '2 2', 'stroke-width': 1 }));
  s += el('path', { d: 'M14 8V373H1207V8', fill: 'none', stroke: '#dedede', 'stroke-width': 2 });
  s += hline(14, 1207, 190, '#888', { 'stroke-dasharray': '10 10' });
  s += line(minute(average), ORANGE, 5);
  s += line(minute(auction), '#3274c0', 4) + line(minute(price), '#3274b8', 5);
  thick.forEach(part => s += line(minute(part), '#3274c0', 8));
  s += vline(528, 227, 310, '#5a9cf0', { 'stroke-width': 3, 'stroke-dasharray': '9 5' });
  s += el('circle', { cx: 528, cy: 319, r: 7, fill: '#2a7cf0' });
  s += rect(510, 183, 35, 36, '#5098fa', { rx: 6, 'fill-opacity': 0.9 }) + text(527, 214, 'trade', 'S');
  s += text(14, 53, 'label up', '4.81') + text(14, 207, 'label', '4.37') + text(14, 362, 'label down', '3.93');
  s += text(1207, 53, 'label up end', '10.07%') + text(1207, 362, 'label down end', '−10.07%');
  s += text(13, 422, 'label time', '09:15') + text(290, 422, 'label time', '09:30');
  s += text(751, 422, 'label time middle', '11:30/13:00') + text(1207, 422, 'label time end', '15:00');
  document.getElementById('minuteChart').innerHTML = s + hline(14, 1207, 437, '#e2e2e2', { 'stroke-width': 4 });
}

// ---- Intraday volume ----
function drawMinuteVolume() {
  const px = x => (x / 1.285).toFixed(1);
  const shape = (points, fill) => el('polygon', { points: points.map(([x, y]) => px(x) + ',' + y / 3).join(' '), fill });
  let s = rect(12, 87, 281, 84, '#fdeee7');
  [155, 293, 521, 750, 979].forEach(x => s += vline(x, 87, 171, '#ccc', { 'stroke-dasharray': '3 3', 'stroke-width': 1 }));
  s += el('path', { d: 'M12 171V87H1207V171', fill: 'none', stroke: '#dedede', 'stroke-width': 2 });
  // call auction
  s += shape([[40, 513], [40, 425], [60, 431], [100, 441], [130, 445], [168, 448], [172, 455], [195, 459], [225, 459], [250, 455], [285, 445], [290, 438], [318, 433], [324, 423], [345, 408], [362, 388], [368, 362], [368, 337], [373, 337], [373, 513]], GREEN);
  s += shape([[17, 513], [22, 475], [30, 440], [38, 423], [41, 425], [41, 513]], '#ee2626');
  s += shape([[17, 258], [38, 258], [32, 275], [22, 292], [20, 275]], '#ee2626');
  s += shape([[42, 258], [130, 258], [130, 302], [117, 301], [90, 290], [60, 272], [44, 268]], GREEN);
  s += shape([[137, 258], [185, 258], [185, 296], [176, 292], [165, 280], [137, 268]], GREEN);
  s += shape([[189, 258], [229, 258], [229, 272], [215, 270], [189, 263]], GREEN);
  s += hline(180, 286, 87, GREEN, { 'stroke-dasharray': '9 5' });
  [[128, 446, 8], [226, 458, 4], [246, 455, 4], [296, 437, 9], [320, 425, 5], [333, 415, 5], [343, 408, 3], [349, 402, 3], [355, 396, 3], [362, 372, 4]].forEach(([x, y, w]) => {
    s += rect(px(x), y / 3, w / 1.285, 171 - y / 3, w === 8 ? '#ee2626' : '#b04020');
  });
  s += rect(283, 87, 3, 5, '#ee2626') + rect(287, 87, 3, 5, GREEN);
  // one bar a minute
  const heads = [408, 262, 345, 387, 392, 432, 453, 443, 436, 447, 468, 460, 460, 495, 495, 490, 475, 490, 493, 470, 498, 495, 503, 500, 498, 502, 495, 490, 503, 490, 490, 493, 488, 490, 498, 500, 499, 503];
  const headUp = [1, 2, 4, 5, 12, 13, 15, 19, 21, 27, 30, 33, 34, 35];
  const spikes = { 40: 498, 43: 500, 62: 498, 68: 500, 73: 500, 79: 497, 95: 498, 121: 498, 153: 500, 156: 496, 211: 486, 212: 492, 213: 491, 214: 498, 218: 500, 219: 498, 220: 490, 221: 487, 222: 490, 223: 500, 224: 492, 225: 461, 226: 495, 227: 500, 233: 501, 236: 500, 237: 497, 240: 491 };
  for (let i = 0; i < 241; i++) {
    if (i === 239) continue;
    const y = (heads[i] || spikes[i] || 505) / 3;
    const up = i < heads.length ? headUp.includes(i) : (i * 7 % 11 < 5 || i % 23 > 12);
    s += rect((291 + i * 3.800).toFixed(1), y, 3, 171 - y, up ? '#d83030' : '#1f9a1f');
  }
  s += text(297, 121, 'label peak', '39.5万');
  document.getElementById('minuteVolume').innerHTML = s;
}

drawK();
drawVolume();
drawMacd();
drawMinute();
drawMinuteVolume();
```
